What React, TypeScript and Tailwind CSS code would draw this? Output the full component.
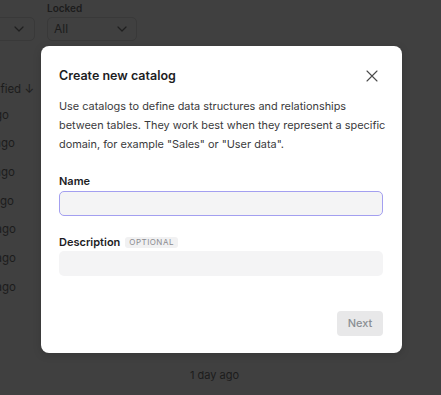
import React from "react";

const Chevron = () => (
  <svg width="10" height="6" viewBox="0 0 10 6" fill="none">
    <path d="M1 1l4 4 4-4" stroke="#1f1f1f" strokeWidth="1.2" strokeLinecap="round" strokeLinejoin="round" />
  </svg>
);

export default function App() {
  const rows = [
    { t: "ago", w: "w-[9px]" },
    { t: "ago", w: "w-[15px]" },
    { t: "ago", w: "w-[15px]" },
    { t: "ago", w: "w-[14px]" },
    { t: "ago", w: "w-[16px]" },
    { t: "ago", w: "w-[16px]" },
    { t: "ago", w: "w-[16px]" },
  ];
  return (
    <div
      className="relative w-[441px] h-[395px] overflow-hidden bg-[#404040] text-[#1c1c1c]"
      style={{ fontFamily: "Inter, 'Noto Sans', sans-serif" }}
    >
      {/* background page */}
      <div className="flex gap-3 pt-[1px]">
        <div className="flex flex-col w-[35px] ml-[-60px]">
          <div className="h-[16px]" />
          <div className="h-[24px] w-[95px] rounded-[5px] border border-[#393939] flex items-center justify-end pr-[10px]">
            <Chevron />
          </div>
        </div>
        <div className="flex flex-col ml-[60px]">
          <div className="text-[10px] font-semibold h-[16px] leading-[14px]">Locked</div>
          <div className="h-[24px] w-[90px] rounded-[5px] border border-[#393939] flex items-center justify-between pl-[6px] pr-[9px] text-[12px]">
            <span>All</span>
            <Chevron />
          </div>
        </div>
      </div>
      <div className="flex flex-col text-[11.5px] mt-[38px]">
        <div className="h-[22px] whitespace-nowrap flex justify-end w-[34px] items-center">fied ↓</div>
        {rows.map((r, i) => (
          <div key={i} className={`h-[28.7px] flex items-center justify-end overflow-hidden ${r.w}`}>
            <span className="whitespace-nowrap">{r.t}</span>
          </div>
        ))}
      </div>
      <div className="absolute left-[190px] top-[367px] text-[11px] whitespace-nowrap">1 day ago</div>

      {/* modal */}
      <div className="absolute left-[41px] top-[46px] w-[361px] h-[307px] bg-white rounded-[8px] shadow-[0_2px_8px_rgba(0,0,0,0.15)] pl-[18px] pr-[19px] pt-[20px] pb-[17px] flex flex-col">
        <div className="flex items-center justify-between h-[20px]">
          <h2 className="text-[12.5px] font-semibold text-[#1d1d1f]">Create new catalog</h2>
          <button className="mr-[5px]">
            <svg width="12" height="12" viewBox="0 0 12 12" fill="none">
              <path d="M1 1l10 10M11 1L1 11" stroke="#4a4a4a" strokeWidth="1.1" strokeLinecap="round" />
            </svg>
          </button>
        </div>
        <p className="mt-[11px] mr-[-6px] text-[10.9px] leading-[19px] text-[#3a3a3c]">
          Use catalogs to define data structures and relationships between tables. They work best when they represent a specific domain, for example "Sales" or "User data".
        </p>
        <label className="mt-[19px] text-[11px] font-semibold text-[#1d1d1f] leading-[16px]">Name</label>
        <div className="mt-[2px] h-[25px] rounded-[5px] border-[1.5px] border-[#a39ff0] bg-[#f4f4f5]" />
        <div className="mt-[18px] flex items-center gap-[5px] h-[16px]">
          <span className="text-[11px] font-semibold text-[#1d1d1f]">Description</span>
          <span className="bg-[#f1f1f2] text-[#8b8b90] text-[8px] tracking-[0.06em] px-[4px] h-[11px] leading-[11px] rounded-[3px]">OPTIONAL</span>
        </div>
        <div className="mt-[1px] h-[25px] rounded-[5px] bg-[#f4f4f5]" />
        <div className="flex-1" />
        <div className="flex justify-end">
          <button className="h-[25px] w-[46px] rounded-[4px] bg-[#e8e8e9] text-[11px] font-medium text-[#8a8f94]">Next</button>
        </div>
      </div>
    </div>
  );
}
